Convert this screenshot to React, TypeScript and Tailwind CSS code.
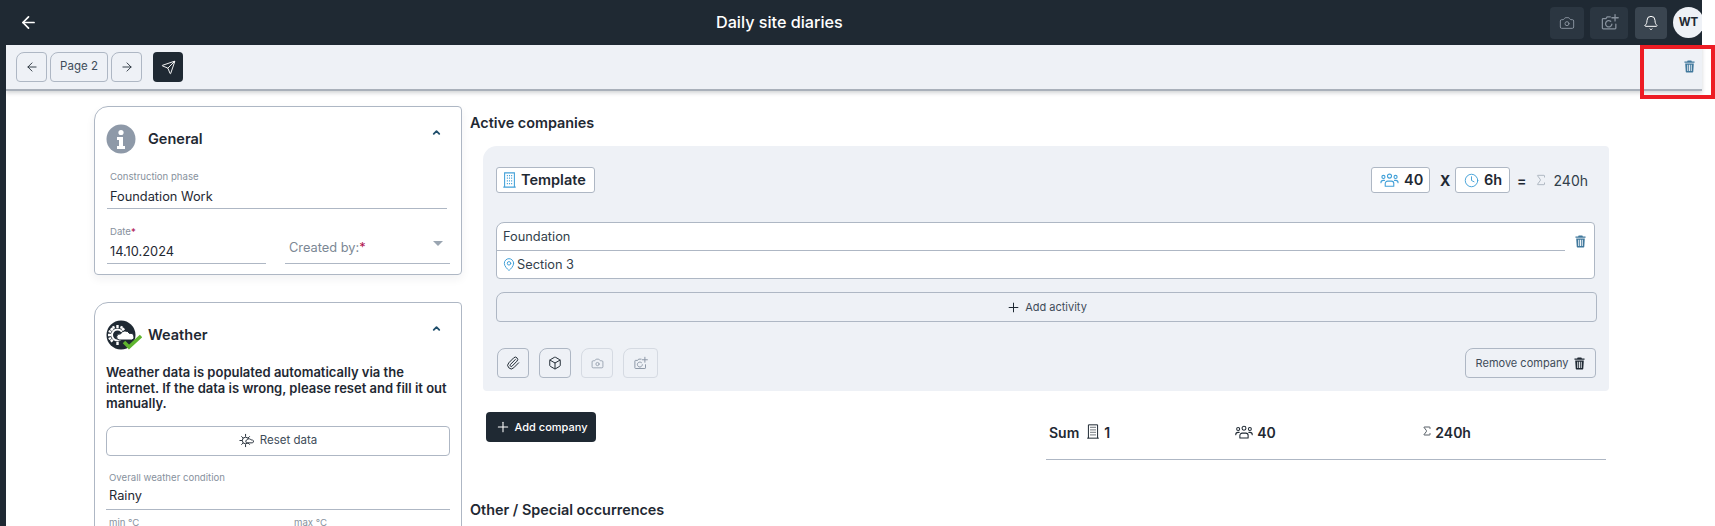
import { ArrowLeft, ArrowRight, Bell, Box, Camera, ChevronUp, Clock, MapPin, Paperclip, Plus, Send, Sigma } from 'lucide-react'
import type { ReactNode } from 'react'

function TrashIcon({ className }: { className?: string }) {
  return (
    <svg viewBox="0 0 12 14" className={className} fill="currentColor">
      <path d="M4 0.5h4l.6 1H11.500v1.400H.5V1.500h2.900z" />
      <path fillRule="evenodd" d="M1.300 3.600h9.400l-.6 9.200c0 .4-.4.7-.8.7H2.700c-.4 0-.8-.3-.8-.7zM3.600 5v7h1V5zm1.900 0v7h1V5zm1.900 0v7h1V5z" />
    </svg>
  )
}

function PhotoAddIcon({ className }: { className?: string }) {
  return (
    <svg viewBox="0 0 24 24" className={className} fill="none" stroke="currentColor" strokeWidth="1.600" strokeLinecap="round" strokeLinejoin="round">
      <path d="M13 5H9L7.500 7H4a1 1 0 0 0-1 1v11a1 1 0 0 0 1 1h15a1 1 0 0 0 1-1v-5" />
      <path d="M15 14a4 4 0 1 1-1.500-3.500" />
      <path d="M19 2v8M15 6h8" />
    </svg>
  )
}

function PeopleIcon({ className }: { className?: string }) {
  return (
    <svg viewBox="0 0 24 18" className={className} fill="none" stroke="currentColor" strokeWidth="1.400" strokeLinecap="round" strokeLinejoin="round">
      <circle cx="12" cy="4" r="2.600" />
      <circle cx="4.200" cy="5" r="2" />
      <circle cx="19.800" cy="5" r="2" />
      <path d="M6.500 17v-3.500a3 3 0 0 1 3-3h5a3 3 0 0 1 3 3V17z" />
      <path d="M1 12.500c0-1.700 1.200-3 3-3h1.500M23 12.500c0-1.700-1.200-3-3-3h-1.500" />
    </svg>
  )
}

function BuildingIcon({ className }: { className?: string }) {
  return (
    <svg viewBox="0 0 14 18" className={className} fill="none" stroke="currentColor" strokeWidth="1.200">
      <path d="M1.500 17V1h11v16M0 17h14" />
      <path d="M4 4h1.200M6.400 4h1.200M8.800 4h1.200M4 7h1.200M6.400 7h1.200M8.800 7h1.200M4 10h1.200M6.400 10h1.200M8.800 10h1.200M4 13h1.200M6.400 13h1.200M8.800 13h1.200" strokeWidth="1.400" />
    </svg>
  )
}

function InfoBadge() {
  return (
    <svg viewBox="0 0 30 30" className="w-[30px] h-[30px] shrink-0">
      <circle cx="15" cy="15" r="14.500" fill="#8e99a8" />
      <circle cx="15" cy="8.500" r="2.600" fill="#fff" />
      <path d="M11 13h6v9h2v3h-8v-3h2v-6h-2z" fill="#fff" />
    </svg>
  )
}

function WeatherBadge() {
  return (
    <svg viewBox="0 0 36 30" className="w-[36px] h-[30px] shrink-0">
      <circle cx="15" cy="15" r="14.500" fill="#1f2933" />
      <g stroke="#fff" fill="none">
        <circle cx="11.500" cy="15" r="5.500" strokeWidth="2" />
        <path strokeWidth="2.400" d="M11.500 5v3M11.500 22v3M2 15h3M4.800 8.300l2 2M4.800 21.700l2-2M18.200 8.300l-2 2M7 6.200l1 2.400M16 6.200l-1 2.400M2.700 11l2.400 1M2.700 19l2.400-1" />
      </g>
      <path d="M13 20a3 3 0 0 1 1.500-6 5 5 0 0 1 9-.5 3 3 0 0 1 2 6.500z" fill="#fff" stroke="#1f2933" strokeWidth="1" />
      <path d="M18 22l5 5 12-11" fill="none" stroke="#5fb52f" strokeWidth="3.500" />
    </svg>
  )
}

function SunCloudIcon() {
  return (
    <svg viewBox="0 0 16 16" className="w-[15px] h-[15px]" fill="none" stroke="#1f2933" strokeWidth="1">
      <circle cx="7" cy="8" r="3.500" />
      <path d="M7 1v3M7 12v3M0.500 8h3M2.500 3.500l2 2M2.500 12.500l2-2M11.500 3.500l-2 2M11.500 12.500l-2-2" />
      <path d="M8 10.500a2 2 0 0 1 1-3.500 2.500 2.500 0 0 1 4 .5 1.500 1.500 0 0 1 1.500 3z" fill="#fff" />
    </svg>
  )
}

function Field({ label, value, className, valueClass = 'mt-[4px] pb-[1px]' }: { label: ReactNode; value: string; className?: string; valueClass?: string }) {
  return (
    <div className={className}>
      <div className="text-[9.600px] leading-[12px] text-[#87919d] pl-[3px]">{label}</div>
      <div className={`text-[12.800px] leading-[20px] pl-[3px] text-[#1f2933] border-b border-[#aeb7c4] ${valueClass}`}>{value}</div>
    </div>
  )
}

function Chip({ children, className }: { children: ReactNode; className?: string }) {
  return (
    <div className={`h-[26px] flex items-center bg-white border border-[#aeb7c4] rounded-[3px] text-[#1f2933] font-semibold text-[14.500px] ${className ?? ''}`}>
      {children}
    </div>
  )
}

function IconBtn({ children, faded, className }: { children: ReactNode; faded?: boolean; className?: string }) {
  return (
    <button className={`h-[30px] flex items-center justify-center border rounded-[4px] rounded-tl-[8px] ${faded ? 'border-[#d5dae2] text-[#8e99a8]' : 'border-[#aeb7c4] text-[#1f2933]'} ${className ?? ''}`}>
      {children}
    </button>
  )
}

export default function App() {
  return (
    <div className="relative w-[1715px] h-[526px] overflow-hidden bg-white" style={{ fontFamily: 'Inter, sans-serif' }}>
      <div className="w-[1702px] h-full flex flex-col">
        {/* Top bar */}
        <header className="h-[45px] shrink-0 bg-[#1f2933] flex items-center pl-[19px] overflow-hidden">
          <ArrowLeft className="w-[19px] h-[19px] text-white" strokeWidth={2.200} />
          <h1 className="ml-[678px] text-[16.200px] font-medium text-white">Daily site diaries</h1>
          <div className="ml-auto flex items-center">
            <div className="w-[34px] h-[32px] bg-[#2b3641] rounded-[4px] flex items-center justify-center text-[#87919d]">
              <Camera className="w-[16px] h-[16px]" strokeWidth={1.500} />
            </div>
            <div className="ml-[6px] w-[38px] h-[32px] bg-[#2b3641] rounded-[4px] flex items-center justify-center text-[#87919d]">
              <PhotoAddIcon className="w-[19px] h-[19px]" />
            </div>
            <div className="ml-[7px] w-[32px] h-[32px] bg-[#3a4550] rounded-[4px] flex items-center justify-center text-white">
              <Bell className="w-[16px] h-[16px]" strokeWidth={1.500} />
            </div>
            <div className="ml-[6px] mr-[-2px] w-[31px] h-[31px] rounded-full bg-[#eef1f6] flex items-center justify-center text-[11.500px] font-bold text-[#1f2933]">
              WT
            </div>
          </div>
        </header>

        <div className="flex-1 min-h-0 flex">
          <div className="w-[6px] shrink-0 bg-[#1f2933]" />
          <div className="flex-1 min-w-0 flex flex-col">
            {/* Toolbar */}
            <div className="h-[46px] shrink-0 bg-[#eef1f6] border-b-2 border-[#a9b0ba] shadow-[0_2px_4px_rgba(31,41,51,0.2)] flex items-center pl-[10px] pr-[7px] relative">
              <IconBtn className="w-[31px]"><ArrowLeft className="w-[14px] h-[14px]" strokeWidth={1.500} /></IconBtn>
              <IconBtn className="ml-[3px] w-[58px]"><span className="text-[11.500px] font-normal text-[#3e4c59]">Page 2</span></IconBtn>
              <IconBtn className="ml-[3px] w-[31px]"><ArrowRight className="w-[14px] h-[14px]" strokeWidth={1.500} /></IconBtn>
              <div className="ml-[11px] w-[30px] h-[30px] rounded-[4px] bg-[#1f2933] flex items-center justify-center">
                <Send className="w-[15px] h-[15px] text-white" strokeWidth={1.500} />
              </div>
              <TrashIcon className="ml-auto mt-[-2px] w-[11px] h-[13px] text-[#40789c]" />
            </div>

            {/* Content */}
            <div className="flex-1 min-h-0 flex pt-[15px] overflow-hidden">
              <div className="ml-[88px] w-[368px] shrink-0">
                <section className="h-[169px] border border-[#aeb7c4] rounded-[4px] rounded-tl-[14px] shadow-[0_4px_10px_rgba(31,41,51,0.06)] pl-[11px] pr-[11px] pt-[17px]">
                  <div className="flex items-center h-[30px]">
                    <InfoBadge />
                    <span className="ml-[12px] text-[14.500px] font-semibold text-[#1f2933]">General</span>
                    <ChevronUp className="ml-auto mr-[8px] mt-[-14px] w-[11px] h-[11px] text-[#1f4e6b]" strokeWidth={4} />
                  </div>
                  <Field className="mt-[17px] ml-[1px] mr-[3px]" label="Construction phase" value="Foundation Work" />
                  <div className="mt-[17px] ml-[1px] flex items-end">
                    <Field className="w-[159px]" label={<>Date<span className="text-[#b0124f]">*</span></>} value="14.10.2024" valueClass="mt-[4px] pb-[1px]" />
                    <div className="ml-[19px] w-[165px] h-[29px] flex items-start border-b border-[#aeb7c4] text-[12.800px] leading-[18px] text-[#7b8794] pl-[4px]">
                      <span className="mt-[4px]">Created by:<span className="text-[#b0124f]">*</span></span>
                      <span className="ml-auto mr-[7px] mt-[6px] w-0 h-0 border-x-[5px] border-x-transparent border-t-[5px] border-t-[#9aa5b1]" />
                    </div>
                  </div>
                </section>

                <section className="mt-[27px] h-[300px] border border-[#aeb7c4] rounded-[4px] rounded-tl-[14px] pl-[11px] pr-[11px] pt-[17px]">
                  <div className="flex items-center h-[30px]">
                    <WeatherBadge />
                    <span className="ml-[6px] text-[14.500px] font-semibold text-[#1f2933]">Weather</span>
                    <ChevronUp className="ml-auto mr-[8px] mt-[-14px] w-[11px] h-[11px] text-[#1f4e6b]" strokeWidth={4} />
                  </div>
                  <p className="mt-[15px] text-[13px] leading-[15.500px] font-semibold text-[#1f2933]">
                    Weather data is populated automatically via the internet. If the data is wrong, please reset and fill it out manually.
                  </p>
                  <button className="mt-[14px] w-[344px] h-[30px] flex items-center justify-center gap-[6px] border border-[#aeb7c4] rounded-[4px] rounded-tl-[8px] text-[11.500px] text-[#3e4c59]">
                    <SunCloudIcon />
                    Reset data
                  </button>
                  <Field className="mt-[16px] w-[344px]" label="Overall weather condition" value="Rainy" valueClass="mt-[2px] pb-[3px]" />
                  <div className="mt-[7px] pl-[3px] flex text-[9.600px] leading-[12px] text-[#87919d]">
                    <span className="w-[185px]">min °C</span>
                    <span>max °C</span>
                  </div>
                </section>
              </div>

              <div className="ml-[8px] w-[1140px] shrink-0">
                <h2 className="pt-[8px] text-[14.400px] leading-[18px] font-semibold text-[#1f2933]">Active companies</h2>

                <div className="ml-[13px] mt-[14px] w-[1126px] h-[245px] bg-[#eef1f6] rounded-[4px] rounded-tl-[14px] pl-[13px] pr-[12px] pt-[21px]">
                  <div className="flex items-center">
                    <Chip className="w-[99px] pl-[6px] gap-[5px]">
                      <BuildingIcon className="w-[13px] h-[16px] text-[#41a0d8]" />
                      Template
                    </Chip>
                    <Chip className="ml-auto w-[59px] pl-[8px] gap-[5px]">
                      <PeopleIcon className="w-[19px] h-[14px] text-[#41a0d8]" />
                      40
                    </Chip>
                    <span className="ml-[10px] w-[13px] text-[14px] font-bold text-[#1f2933]">X</span>
                    <Chip className="ml-[2px] w-[55px] pl-[8px] gap-[5px]">
                      <Clock className="w-[15px] h-[15px] text-[#41a0d8]" strokeWidth={1.500} />
                      6h
                    </Chip>
                    <span className="ml-[7px] text-[14px] font-semibold text-[#1f2933]">=</span>
                    <Sigma className="ml-[7px] w-[14px] h-[14px] text-[#9aa5b1]" strokeWidth={1.300} />
                    <span className="ml-[6px] mr-[9px] text-[14px] text-[#323f4b]">240h</span>
                  </div>

                  <div className="mt-[29px] h-[57px] w-[1099px] bg-white border border-[#aeb7c4] rounded-[4px] rounded-tl-[8px] flex">
                    <div className="w-[1068px] flex flex-col">
                      <div className="h-[28px] border-b border-[#aeb7c4] pl-[6px] flex items-center text-[12.800px] text-[#323f4b]">Foundation</div>
                      <div className="flex-1 pl-[5px] flex items-center gap-[1px] text-[12.800px] text-[#323f4b]">
                        <MapPin className="w-[14px] h-[15px] text-[#41a0d8]" strokeWidth={1.700} />
                        Section 3
                      </div>
                    </div>
                    <TrashIcon className="ml-[10px] mt-[12px] w-[11px] h-[13px] text-[#40789c]" />
                  </div>

                  <button className="mt-[13px] w-[1101px] h-[30px] flex items-center justify-center gap-[4px] border border-[#aeb7c4] rounded-[4px] rounded-tl-[8px] text-[11px] text-[#3e4c59]">
                    <Plus className="w-[15px] h-[15px] text-[#1f2933]" strokeWidth={1.600} />
                    Add activity
                  </button>

                  <div className="mt-[26px] flex items-center">
                    <IconBtn className="ml-[1px] w-[32px]"><Paperclip className="w-[14px] h-[14px]" strokeWidth={1.700} /></IconBtn>
                    <IconBtn className="ml-[10px] w-[32px]"><Box className="w-[14px] h-[14px]" strokeWidth={1.700} /></IconBtn>
                    <IconBtn faded className="ml-[10px] w-[32px]"><Camera className="w-[13px] h-[13px]" strokeWidth={1.500} /></IconBtn>
                    <IconBtn faded className="ml-[10px] w-[35px]"><PhotoAddIcon className="w-[15px] h-[15px]" /></IconBtn>
                    <IconBtn className="ml-auto mr-[1px] w-[131px] gap-[6px]">
                      <span className="text-[11px] text-[#3e4c59]">Remove company</span>
                      <TrashIcon className="w-[11px] h-[13px] text-[#1f2933]" />
                    </IconBtn>
                  </div>
                </div>

                <div className="flex">
                  <button className="ml-[16px] mt-[21px] w-[110px] h-[30px] bg-[#1f2933] rounded-[4px] flex items-center justify-center gap-[4px] text-[11px] font-medium text-white">
                    <Plus className="w-[16px] h-[16px]" strokeWidth={1.600} />
                    Add company
                  </button>
                  <div className="ml-[450px] mt-[26px] w-[560px] h-[43px] border-b border-[#aeb7c4] flex items-start pt-[5px] pl-[3px] text-[14px] font-semibold text-[#1f2933]">
                    <span>Sum</span>
                    <BuildingIcon className="ml-[8px] mt-[2px] w-[12px] h-[15px]" />
                    <span className="ml-[5px] w-[131px]">1</span>
                    <PeopleIcon className="w-[18px] h-[14px] mt-[3px]" />
                    <span className="ml-[4px] w-[164px]">40</span>
                    <Sigma className="w-[12px] h-[14px] mt-[2px]" strokeWidth={1.500} />
                    <span className="ml-[2px]">240h</span>
                  </div>
                </div>

                <h2 className="mt-[41px] text-[14.400px] leading-[18px] font-semibold text-[#1f2933]">Other / Special occurrences</h2>
              </div>
            </div>
          </div>
        </div>
      </div>

      {/* Annotation box over the toolbar */}
      <div className="absolute left-[1640px] top-[45px] w-[75px] h-[54px] border-[4px] border-[#ed1c24]" />
    </div>
  )
}
